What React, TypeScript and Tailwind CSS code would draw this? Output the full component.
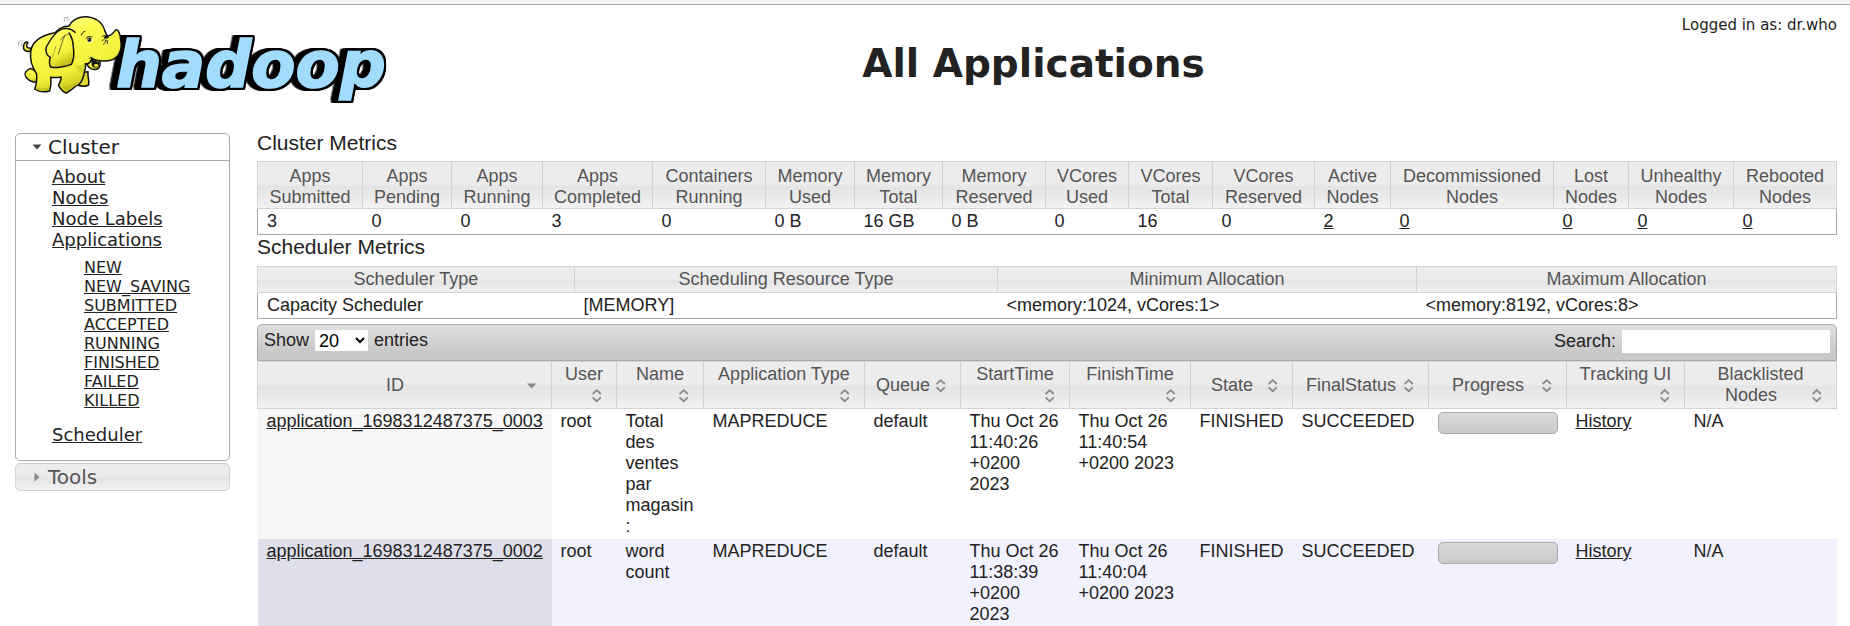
import type { ReactNode } from "react";

const headerFill =
  "bg-[linear-gradient(#ececec_0%,#ececec_48%,#e4e4e4_52%,#f1f1f1_100%)]";

const clusterMetrics = [
  { label: ["Apps", "Submitted"], value: "3", col: "w-[105px]" },
  { label: ["Apps", "Pending"], value: "0", col: "w-[89px]" },
  { label: ["Apps", "Running"], value: "0", col: "w-[91px]" },
  { label: ["Apps", "Completed"], value: "3", col: "w-[110px]" },
  { label: ["Containers", "Running"], value: "0", col: "w-[113px]" },
  { label: ["Memory", "Used"], value: "0 B", col: "w-[89px]" },
  { label: ["Memory", "Total"], value: "16 GB", col: "w-[88px]" },
  { label: ["Memory", "Reserved"], value: "0 B", col: "w-[103px]" },
  { label: ["VCores", "Used"], value: "0", col: "w-[83px]" },
  { label: ["VCores", "Total"], value: "16", col: "w-[84px]" },
  { label: ["VCores", "Reserved"], value: "0", col: "w-[102px]" },
  { label: ["Active", "Nodes"], value: "2", col: "w-[76px]", link: true },
  { label: ["Decommissioned", "Nodes"], value: "0", col: "w-[163px]", link: true },
  { label: ["Lost", "Nodes"], value: "0", col: "w-[75px]", link: true },
  { label: ["Unhealthy", "Nodes"], value: "0", col: "w-[105px]", link: true },
  { label: ["Rebooted", "Nodes"], value: "0", col: "w-[103px]", link: true },
];

const schedulerMetrics = [
  { label: "Scheduler Type", value: "Capacity Scheduler", col: "w-[317px]" },
  { label: "Scheduling Resource Type", value: "[MEMORY]", col: "w-[423px]" },
  { label: "Minimum Allocation", value: "<memory:1024, vCores:1>", col: "w-[419px]" },
  { label: "Maximum Allocation", value: "<memory:8192, vCores:8>", col: "w-[420px]" },
];

const appColumns = [
  { label: "ID", col: "w-[294px]", sorted: true },
  { label: "User", col: "w-[65px]" },
  { label: "Name", col: "w-[87px]" },
  { label: "Application Type", col: "w-[161px]" },
  { label: "Queue", col: "w-[96px]" },
  { label: "StartTime", col: "w-[109px]" },
  { label: "FinishTime", col: "w-[121px]" },
  { label: "State", col: "w-[102px]" },
  { label: "FinalStatus", col: "w-[136px]" },
  { label: "Progress", col: "w-[138px]" },
  { label: "Tracking UI", col: "w-[118px]" },
  { label: "Blacklisted Nodes", col: "w-[152px]" },
];

const apps = [
  {
    id: "application_1698312487375_0003",
    name: "Total des ventes par magasin :",
    start: "Thu Oct 26 11:40:26 +0200 2023",
    finish: "Thu Oct 26 11:40:54 +0200 2023",
    row: "bg-white",
    idCell: "bg-[#f7f7f7]",
  },
  {
    id: "application_1698312487375_0002",
    name: "word count",
    start: "Thu Oct 26 11:38:39 +0200 2023",
    finish: "Thu Oct 26 11:40:04 +0200 2023",
    row: "bg-[#f2f2ff]",
    idCell: "bg-[#dfdfeb]",
  },
];

const appStates = [
  "NEW",
  "NEW_SAVING",
  "SUBMITTED",
  "ACCEPTED",
  "RUNNING",
  "FINISHED",
  "FAILED",
  "KILLED",
];

function Link({ children }: { children: ReactNode }) {
  return (
    <a href="#" className="underline">
      {children}
    </a>
  );
}

function SortIcon({ sorted }: { sorted?: boolean }) {
  return (
    <svg
      viewBox="0 0 19 19"
      className="float-right h-[21px] w-[19px]"
      aria-hidden="true"
    >
      {sorted ? (
        <path d="M5 7.5h9.4L9.7 12.5z" fill="#888" />
      ) : (
        <g fill="none" stroke="#8a8a8a" strokeWidth="1.8">
          <path d="M5.6 8 9.7 4.2 13.8 8" />
          <path d="M5.6 11.4 9.7 15.2 13.8 11.4" />
        </g>
      )}
    </svg>
  );
}

function Logo() {
  return (
    <svg viewBox="0 0 1170 315" className="block h-[105px] w-[390px]" role="img" aria-label="hadoop">
      <defs>
        <linearGradient id="hide" x1="0" y1="0" x2="0.4" y2="1">
          <stop offset="0" stopColor="#ffffb0" />
          <stop offset="0.35" stopColor="#fbfb4e" />
          <stop offset="0.75" stopColor="#f1f03a" />
          <stop offset="1" stopColor="#c9c21c" />
        </linearGradient>
      </defs>
      <text
        x="318"
        y="245"
        fontSize="193"
        fill="#a1dcff"
        stroke="#a1dcff"
        strokeWidth="5"
        className="font-['DejaVu_Sans'] font-bold italic [filter:drop-shadow(6px_0_0_#000)_drop-shadow(-6px_0_0_#000)_drop-shadow(0_6px_0_#000)_drop-shadow(0_-6px_0_#000)_drop-shadow(-8px_0_0_#000)_drop-shadow(-8px_0_0_#000)]"
      >
        hadoop
      </text>
      <g stroke="#111" strokeWidth="4.5" strokeLinejoin="round" strokeLinecap="round" fill="url(#hide)">
        <path d="M61 139C46 142 38 133 41 121C43 112 50 108 54 113C49 117 48 126 54 128C58 130 62 130 64 130Z" />
        <path d="M62 190C48 196 41 206 47 214C52 224 64 231 80 232L88 205Z" />
        <path d="M204 204L234 200C232 215 239 228 236 240C226 245 211 243 203 240Z" fill="#e0dc30" />
        <path d="M228 168C232 188 246 198 262 192C272 187 272 176 268 162Z" />
        <path d="M135 83C98 90 66 107 62 140C59 166 66 187 80 207C81 223 79 240 74 252C85 260 104 262 119 258C122 246 125 234 122 217C135 218 145 218 153 216C154 226 150 233 145 241C151 251 158 262 169 264C180 260 192 245 206 239C219 229 222 211 224 197C229 187 226 180 226 176C238 178 243 170 245 160C262 170 290 170 308 164C329 154 337 131 332 105C331 87 325 72 317 75C310 81 309 90 294 94C286 88 289 85 284 76C277 50 253 35 225 35C201 35 183 49 177 63C160 64 145 72 135 83Z" />
        <path d="M195 82C182 68 160 67 145 78C132 88 119 107 109 126C105 140 111 153 121 157C118 167 117 178 122 186C137 191 171 184 184 178C192 165 193 148 190 126C189 105 182 91 177 84" />
      </g>
      <path d="M244 161C250 166 258 169 268 170C271 181 262 190 251 187C244 184 244 171 244 161Z" fill="#151515" />
      <path d="M251 181C256 174 264 178 266 181C262 187 254 188 251 181Z" fill="#eadf37" />
      <g fill="none" stroke="#222" strokeWidth="3" strokeLinecap="round">
        <path d="M214 90C216 83 220 80 225 79" />
        <path d="M228 100C231 94 240 93 246 96" />
        <path d="M277 94C283 90 293 92 295 98" />
        <path d="M276 107C280 103 287 103 291 109M281 118L288 107M292 116L293 107" strokeWidth="2.5" />
        <path d="M239 160C240 157 244 156 247 158" />
        <path d="M173 88C162 91 155 98 152 105M164 92C157 111 150 130 145 147" strokeWidth="2" />
        <path d="M138 122C134 136 130 150 126 157" strokeWidth="1.8" opacity="0.5" />
      </g>
      <ellipse cx="240" cy="106" rx="8" ry="7" fill="#fffde0" />
      <ellipse cx="238" cy="104" rx="6" ry="6.5" fill="#111" />
      <ellipse cx="288" cy="97" rx="6" ry="4.5" fill="#111" />
      <ellipse cx="236" cy="102" rx="1.6" ry="1.8" fill="#fff" />
      <g fill="none" stroke="#999" strokeWidth="2.2" strokeLinecap="round">
        <path d="M163 49L163 38 174 38M170 46L178 40" />
        <path d="M25 121L27 110 34 106M34 123L34 114 41 108" />
      </g>
      <path d="M85 245C95 251 109 251 117 247L117 256C103 260 87 257 77 252Z" fill="#b9b21c" opacity="0.55" />
      <path d="M156 243C169 248 186 236 202 231L203 238C189 246 180 258 169 261Z" fill="#b9b21c" opacity="0.55" />
      <path d="M190 180C202 185 214 179 223 178C224 190 218 204 206 205C203 193 198 186 190 180Z" fill="#b9b21c" opacity="0.4" />
    </svg>
  );
}

function Sidebar() {
  return (
    <nav className="w-[215px] shrink-0 font-['DejaVu_Sans',sans-serif]">
      <div className="rounded-[5px] border border-[#aaa]">
        <h3 className="border-b border-[#aaa]">
          <button type="button" aria-expanded="true" className="flex h-[26px] w-full items-center pl-4 text-xl">
            <svg viewBox="0 0 10 6" className="mr-1.5 h-1.5 w-2.5" aria-hidden="true">
              <path d="M0.5 0.5h9L5 5.5z" fill="#454545" />
            </svg>
            Cluster
          </button>
        </h3>
        <ul className="pt-[5px] pb-[15px] pl-9 text-lg/[21px]">
          <li><Link>About</Link></li>
          <li><Link>Nodes</Link></li>
          <li><Link>Node Labels</Link></li>
          <li>
            <Link>Applications</Link>
            <ul className="mt-2 mb-3.5 pl-8 text-base/[19px]">
              {appStates.map((s) => (
                <li key={s}><Link>{s}</Link></li>
              ))}
            </ul>
          </li>
          <li><Link>Scheduler</Link></li>
        </ul>
      </div>
      <h3 className={`mt-0.5 rounded-[5px] border border-[#d3d3d3] ${headerFill}`}>
        <button type="button" aria-expanded="false" className="flex h-[26px] w-full items-center pl-[18px] text-xl text-[#555]">
          <svg viewBox="0 0 6 10" className="mr-2 h-2.5 w-1.5" aria-hidden="true">
            <path d="M0.5 0.5v9L5.5 5z" fill="#888" />
          </svg>
          Tools
        </button>
      </h3>
    </nav>
  );
}

export default function App() {
  const th = `border border-[#d3d3d3] px-1 font-normal text-[#555] ${headerFill}`;
  const td = "px-[9px] py-0.5 align-top";
  return (
    <div className="h-screen overflow-hidden bg-white font-['Liberation_Sans',Arial,sans-serif] text-lg/[21px] text-[#222]">
      <div className="h-[5px] border-b border-[#aaa] bg-[#f4f4f4]" />
      <header className="flex h-32 items-start pr-[13px]">
        <div className="w-[230px] shrink-0 pl-2.5">
          <Logo />
        </div>
        <div className="flex flex-1 flex-col font-['DejaVu_Sans',sans-serif]">
          <p className="pt-2.5 text-right text-[15px]/5">Logged in as: dr.who</p>
          <h1 className="text-center text-[39px]/[58px] font-bold">All Applications</h1>
        </div>
      </header>

      <div className="flex items-start gap-[27px] pr-[13px] pl-[15px]">
        <Sidebar />
        <main className="min-w-0 flex-1">
          <h2 className="h-7 text-[21px]/[19px]">Cluster Metrics</h2>
          <table className="w-full table-fixed border-collapse">
            <colgroup>
              {clusterMetrics.map((m) => (
                <col key={m.label.join(" ")} className={m.col} />
              ))}
            </colgroup>
            <thead>
              <tr>
                {clusterMetrics.map((m) => (
                  <th key={m.label.join(" ")} className={`${th} pt-1`}>
                    {m.label[0]}
                    <br />
                    {m.label[1]}
                  </th>
                ))}
              </tr>
            </thead>
            <tbody className="border border-[#aaa]">
              <tr>
                {clusterMetrics.map((m) => (
                  <td key={m.label.join(" ")} className={td}>
                    {m.link ? <Link>{m.value}</Link> : m.value}
                  </td>
                ))}
              </tr>
            </tbody>
          </table>

          <h2 className="h-[31px] pt-0.5 text-[21px]/[19px]">Scheduler Metrics</h2>
          <table className="w-full table-fixed border-collapse">
            <colgroup>
              {schedulerMetrics.map((m) => (
                <col key={m.label} className={m.col} />
              ))}
            </colgroup>
            <thead>
              <tr>
                {schedulerMetrics.map((m) => (
                  <th key={m.label} className={`${th} py-0.5`}>{m.label}</th>
                ))}
              </tr>
            </thead>
            <tbody className="border border-[#aaa]">
              <tr>
                {schedulerMetrics.map((m) => (
                  <td key={m.label} className={td}>{m.value}</td>
                ))}
              </tr>
            </tbody>
          </table>

          <div className="mt-[5px] flex h-[37px] items-start justify-between rounded-t-[5px] border border-[#aaa] bg-linear-to-b from-[#e0e0e0] to-[#c8c8c8] to-80% px-1.5 pt-[5px]">
            <label className="flex items-center gap-1.5">
              Show
              <select defaultValue="20" className="h-[21px] w-[53px] bg-white text-lg/[21px] text-black">
                <option>10</option>
                <option>20</option>
                <option>50</option>
                <option>100</option>
              </select>
              entries
            </label>
            <label className="flex items-center gap-1.5">
              Search:
              <input type="text" className="h-[23px] w-52 bg-white px-1" />
            </label>
          </div>
          <table className="w-full table-fixed border-collapse">
            <colgroup>
              {appColumns.map((c) => (
                <col key={c.label} className={c.col} />
              ))}
            </colgroup>
            <thead>
              <tr>
                {appColumns.map((c) => (
                  <th
                    key={c.label}
                    aria-sort={c.sorted ? "descending" : undefined}
                    className={`border border-[#d3d3d3] px-2.5 py-0.5 font-normal text-[#555] ${headerFill}`}
                  >
                    <button type="button" className="block w-full text-center">
                      {c.label}
                      <SortIcon sorted={c.sorted} />
                    </button>
                  </th>
                ))}
              </tr>
            </thead>
            <tbody>
              {apps.map((a) => (
                <tr key={a.id} className={a.row}>
                  <td className={`${td} ${a.idCell}`}><Link>{a.id}</Link></td>
                  <td className={td}>root</td>
                  <td className={td}>{a.name}</td>
                  <td className={td}>MAPREDUCE</td>
                  <td className={td}>default</td>
                  <td className={td}>{a.start}</td>
                  <td className={td}>{a.finish}</td>
                  <td className={td}>FINISHED</td>
                  <td className={td}>SUCCEEDED</td>
                  <td className={td}>
                    <div
                      role="progressbar"
                      aria-valuenow={100}
                      aria-label="Progress"
                      className="mt-px h-[22px] rounded-[5px] border border-[#aaa] bg-linear-to-b from-[#dadada] to-[#c9c9c9]"
                    />
                  </td>
                  <td className={td}><Link>History</Link></td>
                  <td className={td}>N/A</td>
                </tr>
              ))}
            </tbody>
          </table>
        </main>
      </div>
    </div>
  );
}
